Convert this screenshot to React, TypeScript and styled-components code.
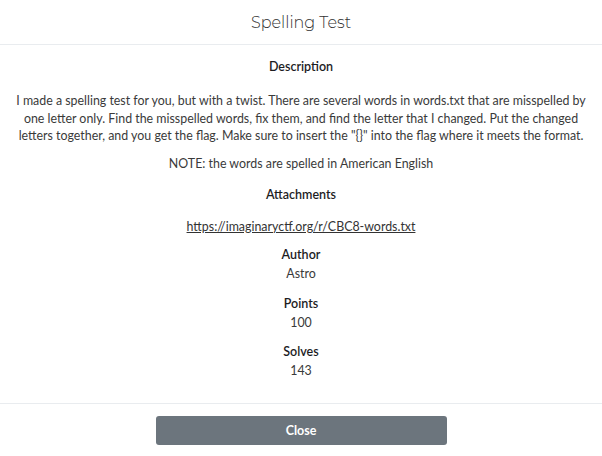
import React from "react";
import styled, { createGlobalStyle } from "styled-components";

const Global = createGlobalStyle`
  html, body { margin: 0; padding: 0; background: #fff; }
  body { font-family: "Lato", "Open Sans", sans-serif; color: #212529; }
  * { box-sizing: border-box; }
`;

const Modal = styled.div`
  width: 602px;
  height: 456px;
  display: flex;
  flex-direction: column;
  background: #fff;
`;

const Header = styled.div`
  height: 45px;
  display: flex;
  align-items: center;
  justify-content: center;
  border-bottom: 1px solid #e9ecef;
`;

const Title = styled.h5`
  margin: 0;
  font-family: "Montserrat", "Lato", sans-serif;
  font-weight: 300;
  font-size: 16px;
  color: #333;
`;

const Body = styled.div`
  flex: 1;
  padding: 13px 8px 0;
  display: flex;
  flex-direction: column;
  align-items: center;
  text-align: center;
  border-bottom: 1px solid #e9ecef;
`;

const Heading = styled.div<{ $mt?: number }>`
  font-weight: 600;
  font-size: 12.5px;
  color: #1d1d1f;
  margin-top: ${(p) => p.$mt ?? 0}px;
  line-height: 18px;
`;

const Text = styled.div<{ $mt?: number }>`
  font-size: 12.4px;
  line-height: 17.5px;
  color: #3a3a3a;
  margin-top: ${(p) => p.$mt ?? 0}px;
`;

const Link = styled.a<{ $mt?: number }>`
  font-size: 12.4px;
  color: #333;
  text-decoration: underline;
  line-height: 18px;
  margin-top: ${(p) => p.$mt ?? 0}px;
`;

const Footer = styled.div`
  height: 52px;
  display: flex;
  align-items: center;
  justify-content: center;
`;

const CloseButton = styled.button`
  width: 291px;
  height: 29px;
  background: #6c757d;
  color: #fff;
  border: none;
  border-radius: 3px;
  font-family: "Lato", sans-serif;
  font-weight: 700;
  font-size: 12.5px;
`;

export default function App() {
  return (
    <>
      <Global />
      <Modal>
        <Header>
          <Title>Spelling Test</Title>
        </Header>
        <Body>
          <Heading>Description</Heading>
          <Text $mt={16}>
            I made a spelling test for you, but with a twist. There are several words in words.txt that are misspelled by one letter only. Find the misspelled words, fix them, and find the letter that I changed. Put the changed letters together, and you get the flag. Make sure to insert the "{"{}"}" into the flag where it meets the format.
          </Text>
          <Text $mt={10}>NOTE: the words are spelled in American English</Text>
          <Heading $mt={14}>Attachments</Heading>
          <Link $mt={14} href="#">https://imaginaryctf.org/r/CBC8-words.txt</Link>
          <Heading $mt={10}>Author</Heading>
          <Text $mt={1}>Astro</Text>
          <Heading $mt={12}>Points</Heading>
          <Text $mt={1}>100</Text>
          <Heading $mt={12}>Solves</Heading>
          <Text $mt={1}>143</Text>
        </Body>
        <Footer>
          <CloseButton>Close</CloseButton>
        </Footer>
      </Modal>
    </>
  );
}
